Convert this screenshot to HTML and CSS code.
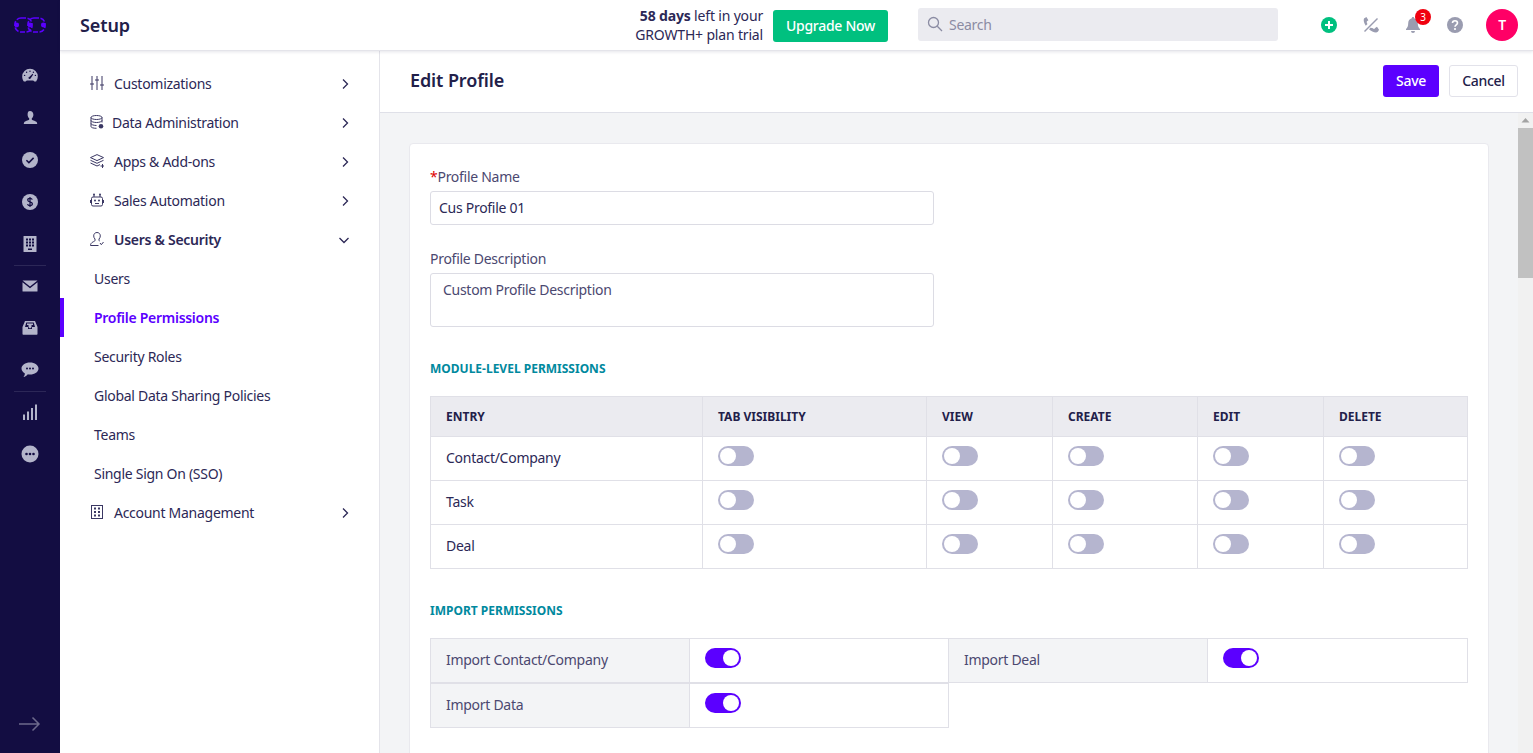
FILE: index.html
```html
<!DOCTYPE html>
<html lang="en">
<head>
<meta charset="utf-8">
<title>Edit Profile</title>
<link rel="stylesheet" href="styles.css">
</head>
<body>
<div class="app">
  <nav class="rail">
    <svg class="logo" viewBox="0 0 32 16" width="32" height="16"><g fill="none" stroke="#5b00ff" stroke-width="1.6" stroke-dasharray="5 1.6"><rect x="1" y="1" width="17" height="14" rx="6"/><rect x="14" y="1" width="17" height="14" rx="6"/></g><circle cx="2.700" cy="8" r="2.400" fill="#5b00ff"/><circle cx="16" cy="8" r="2.400" fill="#5b00ff"/><circle cx="29.300" cy="8" r="2.400" fill="#5b00ff"/></svg>
    <div class="rail-group first">
      <svg class="ri" viewBox="0 0 16 16"><path class="f" fill-rule="evenodd" d="M8 .8A7.800 7.800 0 0 0 .2 8.600c0 1.900.6 3.600 1.700 5h1.700l1.200-1.100h6.400l1.200 1.100h1.700a7.800 7.800 0 0 0 1.700-5A7.800 7.800 0 0 0 8 .8zM7 9.200l3.600-3.400.6.6-2.600 4.200a1.300 1.300 0 0 1-2.200-1.200z"/><g fill="#130d42"><circle cx="8" cy="3.200" r=".7"/><circle cx="4.600" cy="4.200" r=".7"/><circle cx="11.400" cy="4.200" r=".7"/><circle cx="2.600" cy="7.400" r=".7"/><circle cx="13.400" cy="7.400" r=".7"/></g></svg>
      <svg class="ri" viewBox="0 0 16 16"><path class="f" d="M8 1c2 0 3.400 1.500 3.400 3.700 0 1.500-.7 2.800-1.600 3.600v1.200c0 .7 3.300 1.200 4.800 2.600.4.4.6 1.600.6 2H1.800c0-.4.2-1.600.6-2 1.500-1.400 4.800-1.900 4.800-2.600V8.300C6.300 7.500 5.600 6.200 5.600 4.700 5.600 2.500 6 1 8 1z"/></svg>
      <svg class="ri" viewBox="0 0 16 16"><circle class="f" cx="8" cy="8" r="8"/><path d="M4.400 8.200l2.500 2.400 4.700-4.700" fill="none" stroke="#130d42" stroke-width="1.500"/></svg>
      <svg class="ri" viewBox="0 0 16 16"><circle class="f" cx="8" cy="8" r="8"/><path d="M10.300 5.600c-.3-.9-1.200-1.300-2.300-1.300-1.300 0-2.300.6-2.300 1.700 0 2.400 4.700 1.200 4.700 3.800 0 1.100-1 1.800-2.400 1.800-1.200 0-2.200-.5-2.500-1.500M8 3v10" fill="none" stroke="#130d42" stroke-width="1.200"/></svg>
      <svg class="ri" viewBox="0 0 16 16"><path class="f" d="M2 0h12a.5.500 0 0 1 .5.500v15a.5.500 0 0 1-.5.500H2a.5.500 0 0 1-.5-.500V.5A.5.500 0 0 1 2 0z"/><g fill="#130d42"><path d="M4 2.500h2v2H4zM7 2.500h2v2H7zM10 2.500h2v2h-2zM4 5.500h2v2H4zM7 5.500h2v2H7zM10 5.500h2v2h-2zM4 8.500h2v2H4zM7 8.500h2v2H7zM10 8.500h2v2h-2zM6 12.500h4v1.500H6z"/></g></svg>
    </div>
    <div class="rail-group">
      <svg class="ri" viewBox="0 0 16 16"><path class="f" d="M.5 2.500h15L8 8.500zM.5 4.300L8 10.200l7.500-5.900V13a.5.500 0 0 1-.5.500H1A.5.500 0 0 1 .5 13z"/></svg>
      <svg class="ri" viewBox="0 0 16 16"><path class="f" fill-rule="evenodd" d="M3 1h10l2.500 6v7a.8.800 0 0 1-.8.800H1.300a.8.800 0 0 1-.8-.8V7zM4.300 2.500L3 7h3v2h4V7h3l-1.300-4.500z"/><path class="f" d="M5 3.500h6V5H9.500v2.200L8 8.500 6.500 7.200V5H5z"/></svg>
      <svg class="ri wide" viewBox="0 0 18 16"><path class="f" d="M9 .5c4.800 0 8.500 2.700 8.500 6 0 3.400-3.700 6-8.500 6-.8 0-1.500-.1-2.200-.2-.9 1.200-2.700 2.600-4.300 2.700.7-.9 1.300-2.300 1.400-3.600C2 10.300.5 8.500.5 6.500c0-3.300 3.700-6 8.500-6z"/><g fill="#130d42"><circle cx="6" cy="6.500" r="1"/><circle cx="9" cy="6.500" r="1"/><circle cx="12" cy="6.500" r="1"/></g></svg>
    </div>
    <div class="rail-group">
      <svg class="ri" viewBox="0 0 16 16"><path class="f" d="M1 10.500h2V16H1zM5 7.500h2V16H5zM9 4h2v12H9zM13 .5h2V16h-2z"/></svg>
      <svg class="ri big" viewBox="0 0 18 18"><circle class="f" cx="9" cy="9" r="8.500"/><g fill="#130d42"><circle cx="5.500" cy="9" r="1.300"/><circle cx="9" cy="9" r="1.300"/><circle cx="12.500" cy="9" r="1.300"/></g></svg>
    </div>
    <svg class="rail-arrow" viewBox="0 0 22 16" width="22" height="16"><path d="M0 8h20M13.500 1.500L20 8l-6.500 6.500" fill="none" stroke="#6d6a8c" stroke-width="1.500"/></svg>
  </nav>

  <div class="shell">
    <header class="topbar">
      <h1 class="app-title">Setup</h1>
      <div class="trial"><b>58 days</b> left in your<br>GROWTH+ plan trial</div>
      <button class="upgrade">Upgrade Now</button>
      <div class="search">
        <svg viewBox="0 0 16 16" width="16" height="16"><circle cx="6.500" cy="6.500" r="5" fill="none" stroke="#8b8ca3" stroke-width="1.300"/><path d="M10.300 10.300L15 15" stroke="#8b8ca3" stroke-width="1.300"/></svg>
        <span>Search</span>
      </div>
      <div class="top-icons">
        <svg class="ti" viewBox="0 0 16 16"><circle cx="8" cy="8" r="8" fill="#00c07f"/><path d="M8 4v8M4 8h8" stroke="#fff" stroke-width="2"/></svg>
        <svg class="ti" viewBox="0 0 16 16"><path d="M3.400 0L1 1.500C.2 3.200 1 6 2.800 8.700L4.500 7C3.700 5.800 3.500 4.800 4 4.200L5.400 3.200zM9.300 11l1.200.8c.6.300 1.200-.1 1.600-.8L14 9.800l2 3c-.5 1.600-1.700 2.700-3 2.700-2.400 0-5-1.400-7-3.200l1.800-1.800c.5.400 1 .5 1.500.5z" fill="#9a9cb0"/><path d="M14.500 1.500L1.500 14.500" stroke="#9a9cb0" stroke-width="1.500"/></svg>
        <div class="bell">
          <svg class="ti" viewBox="0 0 16 16"><path d="M8 0c.7 0 1.200.5 1.200 1.200 2.300.6 3.600 2.400 3.600 5 0 3 .8 4.200 2.200 5.800v1H1v-1c1.400-1.600 2.200-2.800 2.200-5.800 0-2.600 1.300-4.400 3.600-5C6.800.5 7.300 0 8 0zM6 14h4a2 2 0 0 1-4 0z" fill="#9a9cb0"/></svg>
          <span class="badge">3</span>
        </div>
        <svg class="ti" viewBox="0 0 16 16"><circle cx="8" cy="8" r="8" fill="#9a9cb0"/><path d="M5.500 6c0-1.500 1.100-2.300 2.500-2.300S10.500 4.500 10.500 6c0 1.800-2.500 2-2.500 3.800" fill="none" stroke="#fff" stroke-width="1.600"/><circle cx="8" cy="12" r="1.100" fill="#fff"/></svg>
        <div class="avatar">T</div>
      </div>
    </header>

    <div class="below">
      <aside class="side">
        <div class="side-row"><svg class="si" viewBox="0 0 14 14"><path d="M2 0v14M7 0v14M12 0v14M0 8h4M5 4h4M10 9h4" fill="none" stroke="#3a3763"/></svg><span class="side-label">Customizations</span><svg class="chev" viewBox="0 0 8 12"><path d="M2 1.500L6.500 6 2 10.500" fill="none" stroke="#2c2856" stroke-width="1.300"/></svg></div>
        <div class="side-row"><svg class="si tight" viewBox="0 0 14 14"><g fill="none" stroke="#3a3763"><ellipse cx="6.500" cy="2.500" rx="5.500" ry="2"/><path d="M1 2.500v9c0 1 2.200 1.800 5.500 1.800M12 2.500v5M1 5.500c0 1 2.500 2 5.500 2s5.500-1 5.500-2M1 8.500c0 1 2.500 2 5.500 2"/></g><circle cx="11" cy="11.300" r="2.300" fill="#3a3763"/></svg><span class="side-label">Data Administration</span><svg class="chev" viewBox="0 0 8 12"><path d="M2 1.500L6.500 6 2 10.500" fill="none" stroke="#2c2856" stroke-width="1.300"/></svg></div>
        <div class="side-row"><svg class="si" viewBox="0 0 14 14"><g fill="none" stroke="#3a3763"><path d="M7 .6L13.500 3.600 7 6.600 .5 3.600zM.5 6.300l6.500 3 6.500-3M.5 9l6.500 3 3-1.400"/><path d="M12.500 10v4M10.500 12h4"/></g></svg><span class="side-label">Apps &amp; Add-ons</span><svg class="chev" viewBox="0 0 8 12"><path d="M2 1.500L6.500 6 2 10.500" fill="none" stroke="#2c2856" stroke-width="1.300"/></svg></div>
        <div class="side-row"><svg class="si" viewBox="0 0 14 14"><g fill="none" stroke="#3a3763"><rect x="1.500" y="4" width="11" height="9" rx="1.500"/><path d="M4 4V2M10 4V2M.5 7v3M13.500 7v3M5 10.500h4"/></g><circle cx="4" cy="1.500" r="1" fill="#3a3763"/><circle cx="10" cy="1.500" r="1" fill="#3a3763"/><circle cx="5" cy="7.500" r="1" fill="#3a3763"/><circle cx="9" cy="7.500" r="1" fill="#3a3763"/></svg><span class="side-label">Sales Automation</span><svg class="chev" viewBox="0 0 8 12"><path d="M2 1.500L6.500 6 2 10.500" fill="none" stroke="#2c2856" stroke-width="1.300"/></svg></div>
        <div class="side-row"><svg class="si" viewBox="0 0 14 14"><g fill="none" stroke="#3a3763"><path d="M7 .5c2 0 3.300 1.500 3.300 3.400 0 1.300-.5 2.400-1.300 3.100v1.300c0 .4.300.7.700.8M5 7v1.500c0 1.200-4.500 1.300-4.500 5h8"/><path d="M5 7C4.200 6.300 3.700 5.200 3.700 3.900 3.700 2 5 .5 7 .5M10 11l1.300 1.700 2.200-2.700"/></g></svg><span class="side-label strong">Users &amp; Security</span><svg class="chev down" viewBox="0 0 12 8"><path d="M1.500 2L6 6.500 10.500 2" fill="none" stroke="#2c2856" stroke-width="1.300"/></svg></div>
        <div class="side-row sub">Users</div>
        <div class="side-row sub active">Profile Permissions</div>
        <div class="side-row sub">Security Roles</div>
        <div class="side-row sub">Global Data Sharing Policies</div>
        <div class="side-row sub">Teams</div>
        <div class="side-row sub">Single Sign On (SSO)</div>
        <div class="side-row"><svg class="si" viewBox="0 0 14 14"><rect x="1.500" y=".5" width="11" height="13" fill="none" stroke="#3a3763"/><path d="M4 2.500h2v2H4zM8 2.500h2v2H8zM4 6h2v2H4zM8 6h2v2H8zM4 9.500h2v2H4zM8 9.500h2v2H8z" fill="#3a3763"/></svg><span class="side-label">Account Management</span><svg class="chev" viewBox="0 0 8 12"><path d="M2 1.500L6.500 6 2 10.500" fill="none" stroke="#2c2856" stroke-width="1.300"/></svg></div>
      </aside>

      <main class="main">
        <div class="main-head">
          <h2 class="page-title">Edit Profile</h2>
          <div class="actions">
            <button class="btn primary">Save</button>
            <button class="btn">Cancel</button>
          </div>
        </div>
        <div class="scroll-wrap">
          <div class="content">
            <section class="card">
              <label class="field-label"><span class="req">*</span>Profile Name</label>
              <div class="input">Cus Profile 01</div>
              <label class="field-label second">Profile Description</label>
              <div class="textarea">Custom Profile Description</div>

              <h3 class="section-title">MODULE-LEVEL PERMISSIONS</h3>
              <table class="perm">
                <colgroup><col class="c1"><col class="c2"><col class="c3"><col class="c4"><col class="c5"><col class="c6"></colgroup>
                <thead><tr><th>ENTRY</th><th>TAB VISIBILITY</th><th>VIEW</th><th>CREATE</th><th>EDIT</th><th>DELETE</th></tr></thead>
                <tbody>
                  <tr><td>Contact/Company</td><td><i class="tog"></i></td><td><i class="tog"></i></td><td><i class="tog"></i></td><td><i class="tog"></i></td><td><i class="tog"></i></td></tr>
                  <tr><td>Task</td><td><i class="tog"></i></td><td><i class="tog"></i></td><td><i class="tog"></i></td><td><i class="tog"></i></td><td><i class="tog"></i></td></tr>
                  <tr><td>Deal</td><td><i class="tog"></i></td><td><i class="tog"></i></td><td><i class="tog"></i></td><td><i class="tog"></i></td><td><i class="tog"></i></td></tr>
                </tbody>
              </table>

              <h3 class="section-title import">IMPORT PERMISSIONS</h3>
              <div class="import-grid">
                <div class="ig-label">Import Contact/Company</div><div class="ig-val"><i class="tog on"></i></div>
                <div class="ig-label">Import Deal</div><div class="ig-val"><i class="tog on"></i></div>
                <div class="ig-label">Import Data</div><div class="ig-val"><i class="tog on"></i></div>
              </div>
            </section>
          </div>
          <div class="scrollbar">
            <svg viewBox="0 0 15 15" width="15" height="15"><path d="M3.500 9.500L7.500 5l4 4.500z" fill="#a3a3a3"/></svg>
            <div class="thumb"></div>
          </div>
        </div>
      </main>
    </div>
  </div>
</div>
</body>
</html>
```
FILE: styles.css
```css
* { box-sizing: border-box; }
html, body { margin: 0; height: 100%; overflow: hidden; }
body { font-family: "Noto Sans", "Liberation Sans", sans-serif; font-size: 14px; letter-spacing: -.28px; color: #2c2856; background: #fff; }
button { font-family: inherit; letter-spacing: inherit; }
.app { display: flex; height: 753px; width: 1533px; }

.rail { width: 60px; flex: none; background: #130d42; display: flex; flex-direction: column; align-items: center; padding-top: 17px; position: relative; }
.logo { display: block; }
.rail-group { width: 32px; display: flex; flex-direction: column; align-items: center; gap: 26px; padding: 12px 0 13px; border-bottom: 1px solid #2c2757; }
.rail-group.first { margin-top: 18px; padding-top: 17px; }
.rail-group:last-of-type { border-bottom: 0; }
.ri { width: 16px; height: 16px; display: block; }
.ri.wide { width: 18px; }
.ri.big { width: 18px; height: 18px; margin-top: -1px; }
.f { fill: #b3b4ca; }
.rail-arrow { position: absolute; left: 19px; top: 716px; }

.shell { flex: 1; min-width: 0; display: flex; flex-direction: column; }
.topbar { height: 51px; flex: none; display: flex; align-items: center; padding: 0 15px 1px 20px; background: #fff; border-bottom: 1px solid #e4e4ea; box-shadow: 0 1px 3px rgba(40,40,80,.12); position: relative; z-index: 2; }
.app-title { margin: 0; font-size: 18px; font-weight: 600; line-height: 24px; letter-spacing: -.1px; color: #22204a; }
.trial { margin-left: auto; text-align: right; font-size: 14px; line-height: 19px; letter-spacing: -.17px; color: #2c2856; }
.trial b { font-weight: 700; }
.upgrade { margin: 2px 0 0 10px; width: 115px; height: 32px; border: 0; border-radius: 3px; background: #00c07f; color: #fff; font-size: 14px; font-weight: 500; padding: 0; }
.search { margin-left: 30px; width: 360px; height: 33px; background: #ebebf0; border-radius: 3px; display: flex; align-items: center; gap: 6px; padding-left: 9px; color: #8b8ca3; margin-bottom: 1px; }
.top-icons { margin-left: 43px; display: flex; align-items: center; }
.ti { width: 16px; height: 16px; display: block; }
.top-icons > * { margin-right: 26px; }
.top-icons > .ti:nth-child(4) { margin-right: 23px; }
.top-icons > .avatar { margin-right: 0; }
.bell { position: relative; }
.badge { position: absolute; left: 10px; top: -8px; width: 16px; height: 16px; border-radius: 50%; background: #f0000f; color: #fff; font-size: 10px; line-height: 16px; text-align: center; }
.avatar { width: 32px; height: 32px; border-radius: 50%; background: #ff0066; color: #fff; font-weight: 600; font-size: 14px; display: flex; align-items: center; justify-content: center; }

.below { flex: 1; min-height: 0; display: flex; }
.side { width: 320px; flex: none; border-right: 1px solid #e4e4ea; padding-top: 13px; }
.side-row { height: 39px; display: flex; align-items: center; padding-left: 30px; padding-right: 29px; color: #2c2856; }
.side-label { flex: 1; margin-left: 10px; }
.si { width: 14px; height: 14px; flex: none; margin-top: -1px; }
.si.tight { width: 14px; }
.si.tight + .side-label { margin-left: 8px; }
.strong { font-weight: 600; }
.chev { width: 8px; height: 12px; flex: none; margin-right: 1px; }
.chev.down { width: 12px; height: 8px; margin-right: 0; }
.sub { padding-left: 34px; }
.active { color: #5b00ff; font-weight: 600; position: relative; }
.active::before { content: ""; position: absolute; left: 0; top: 0; bottom: 0; width: 4px; background: #5b00ff; }

.main { flex: 1; min-width: 0; display: flex; flex-direction: column; }
.main-head { height: 62px; flex: none; display: flex; align-items: center; justify-content: space-between; padding: 0 15px 2px 30px; border-bottom: 1px solid #dfe0e8; }
.page-title { margin: 0 0 2px; font-size: 18px; font-weight: 600; letter-spacing: -.1px; color: #22204a; }
.actions { display: flex; gap: 10px; }
.btn { height: 32px; border: 1px solid #e2e2ea; background: #fff; border-radius: 3px; color: #22204a; font-size: 14px; font-weight: 500; padding: 0; width: 69px; }
.btn.primary { width: 56px; border: 0; background: #5b00ff; color: #fff; }

.scroll-wrap { flex: 1; min-height: 0; display: flex; }
.content { flex: 1; min-width: 0; background: #f3f4f6; padding: 30px 29px 0 29px; overflow: hidden; }
.scrollbar { width: 15px; flex: none; background: #f1f1f1; }
.scrollbar svg { display: block; }
.thumb { height: 150px; background: #c1c1c1; }

.card { background: #fff; border: 1px solid #e9e9ee; border-radius: 4px; padding: 23px 20px 30px; height: 800px; }
.field-label { display: block; font-size: 14px; line-height: 20px; color: #4b4870; margin-bottom: 4px; }
.field-label.second { margin-top: 24px; }
.req { color: #e00000; }
.input { width: 504px; height: 34px; border: 1px solid #dcdce4; border-radius: 3px; padding: 0 8px; line-height: 32px; color: #2c2856; }
.textarea { width: 504px; height: 54px; border: 1px solid #dcdce4; border-radius: 3px; padding: 6px 12px; line-height: 20px; color: #4b4870; }
.section-title { margin: 33px 0 19px; font-size: 12px; line-height: 17px; font-weight: 700; letter-spacing: 0; color: #00899e; }
.section-title.import { margin: 33px 0 19px; }

.perm { width: 1037px; table-layout: fixed; border-collapse: collapse; }
.c1 { width: 272px; } .c2 { width: 224px; } .c3 { width: 126px; } .c4 { width: 145px; } .c5 { width: 126px; } .c6 { width: 144px; }
.perm th, .perm td { border: 1px solid #e0e0e7; text-align: left; padding: 0 15px; }
.perm th { height: 40px; background: #ebebf0; font-size: 12px; font-weight: 700; letter-spacing: 0; color: #22204a; }
.perm td { height: 44px; padding-bottom: 2px; }
.tog { display: block; width: 36px; height: 20px; border-radius: 10px; background: #b5b5cf; position: relative; margin-top: -3px; }
.tog::after { content: ""; position: absolute; left: 2px; top: 2px; width: 16px; height: 16px; border-radius: 50%; background: #fff; }
.tog.on { background: #5b00ff; }
.tog.on::after { left: 18px; }

.import-grid { width: 1038px; display: grid; grid-template-columns: 259px 259px 259px 260px; grid-auto-rows: 45px; }
.ig-label, .ig-val { display: flex; align-items: center; border: 1px solid #e0e0e7; padding-left: 15px; margin-right: -1px; }
.ig-label { background: #f3f4f6; color: #4b4870; padding-bottom: 2px; }
.ig-val .tog { margin-top: -5px; }
```
